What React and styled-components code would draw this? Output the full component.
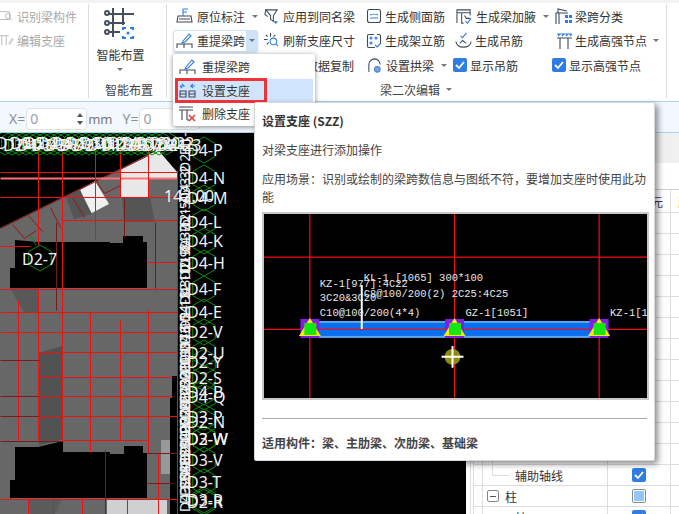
import React from "react";
import styled, { createGlobalStyle } from "styled-components";

const FONT = `"Noto Sans CJK SC", "Noto Sans", sans-serif`;
const INK = "#3f4a57";
const BLUE = "#2f7de1";

const Global = createGlobalStyle`
  html, body { margin: 0; padding: 0; background: #fff; }
  body { font-family: ${FONT}; font-size: 12px; color: #333; }
`;

const Page = styled.div`
  position: relative;
  width: 679px;
  height: 514px;
  overflow: hidden;
  display: flex;
  flex-direction: column;
`;

const Ribbon = styled.div`
  display: flex;
  height: 101px;
  box-sizing: border-box;
  padding: 1px 12px 3px 0;
  border-top: 3px solid #f3f3f3;
  background: #fff;
`;
const Group = styled.div`
  width: ${(p) => p.$w}px;
  flex: ${(p) => (p.$grow ? "1" : "none")};
  box-sizing: border-box;
  border-right: 1px solid #dcdcdc;
  display: flex;
  flex-direction: column;
  align-items: ${(p) => (p.$center ? "center" : "stretch")};
  padding-left: ${(p) => p.$pad || 0}px;
`;
const Item = styled.div`
  display: flex;
  align-items: center;
  gap: ${(p) => p.$gap ?? 3}px;
  height: 24.5px;
  padding-left: ${(p) => p.$ml || 0}px;
  white-space: nowrap;
  font-size: 12px;
  color: ${(p) => (p.$disabled ? "#a8a8a8" : "#333")};
`;
const Caret = styled.span`
  width: 0;
  height: 0;
  margin-left: ${(p) => p.$ml ?? 4}px;
  border-left: 3px solid transparent;
  border-right: 3px solid transparent;
  border-top: 3px solid #777;
`;
const BigButton = styled.div`
  display: flex;
  flex-direction: column;
  align-items: center;
  padding-top: 4px;
  margin-right: 14px;
  line-height: 18px;
  height: 76px;
  box-sizing: border-box;
  gap: 4px;
`;
const GroupLabel = styled.div`
  display: flex;
  align-items: center;
  justify-content: center;
  height: 18px;
  margin-top: ${(p) => p.$mt ?? 0}px;
  margin-left: ${(p) => p.$shift || 0}px;
  padding-right: ${(p) => p.$back || 0}px;
  color: #444;
  font-size: 12px;
`;
const Columns = styled.div`
  display: flex;
  height: 74px;
`;
const Column = styled.div`
  width: ${(p) => p.$w}px;
  flex: none;
  display: flex;
  flex-direction: column;
`;
const Active = styled.div`
  position: relative;
  display: flex;
  align-items: center;
  gap: 3px;
  width: 85px;
  height: 22px;
  margin: 1px 0 1.5px -1px;
  padding-left: 2px;
  box-sizing: border-box;
  border: 1px solid #cfe2f7;
  border-radius: 3px;
  background: #fff;
  box-shadow: 0 1px 2px rgba(120, 160, 210, 0.4);
`;
const ActiveArrow = styled.span`
  position: absolute;
  top: 0;
  right: 0;
  bottom: 0;
  width: 11px;
  display: flex;
  align-items: center;
  justify-content: center;
  background: #cfe3f8;
`;
const Check = styled.span`
  width: 14px;
  height: 14px;
  flex: none;
  border-radius: 2px;
  background: ${BLUE};
  display: flex;
  align-items: center;
  justify-content: center;
`;

const OptionBar = styled.div`
  height: 32px;
  box-sizing: border-box;
  padding: 3px 0 0 9px;
  display: flex;
  align-items: center;
  background: #f2f8fe;
  border-top: 1px solid #a9d0f3;
  border-bottom: 1px solid #a9d0f3;
  font-family: "Noto Sans", sans-serif;
  font-size: 14px;
  color: #8a8f96;
`;
const NumberField = styled.div`
  width: 61px;
  height: 22px;
  margin: 0 1px 0 1px;
  box-sizing: border-box;
  border: 1px solid #dfe3e8;
  border-radius: 4px;
  background: #fff;
  padding-left: 3px;
  display: flex;
  align-items: center;
  justify-content: space-between;
  color: #9aa0a6;
`;
const Spin = styled.span`
  width: 12px;
  display: flex;
  flex-direction: column;
  align-items: center;
  gap: 4px;
`;
const SpinArrow = styled.i`
  width: 0;
  height: 0;
  border-left: 3px solid transparent;
  border-right: 3px solid transparent;
  ${(p) => (p.$up ? "border-bottom: 4px solid #555;" : "border-top: 4px solid #555;")}
`;
const Unit = styled.span`
  margin-right: 10px;
  font-size: 13px;
  color: #777;
`;

const Main = styled.div`
  flex: 1;
  display: flex;
  min-height: 0;
`;
const Canvas = styled.svg`
  width: 466px;
  height: 381px;
  flex: none;
  display: block;
  background: #000;
`;
const Side = styled.div`
  flex: 1;
  display: flex;
  flex-direction: column;
  background: #fff;
`;
const SideTools = styled.div`
  height: 30px;
  background: #f0f0f0;
  flex: none;
`;
const SideGap = styled.div`
  height: 26px;
  flex: none;
  border-bottom: 1px solid #cfcfcf;
`;
const Table = styled.div`
  margin-left: 4px;
  border-left: 1px solid #ddd;
  padding-left: 2px;
  flex: 1;
`;
const Row = styled.div`
  display: grid;
  grid-template-columns: 9px 125px 63px 1fr;
  height: ${(p) => p.$h || 21}px;
  box-sizing: border-box;
  border-bottom: 1px solid #dedede;
`;
const Cell = styled.div`
  position: relative;
  border-left: 1px solid #dedede;
  display: flex;
  align-items: center;
  justify-content: ${(p) => (p.$center ? "center" : p.$end ? "flex-end" : "flex-start")};
  padding-left: ${(p) => p.$pad || 0}px;
  padding-right: ${(p) => p.$padEnd || 0}px;
  font-size: 12px;
  white-space: nowrap;
  color: ${(p) => p.$color || "#333"};
`;
const TreeLine = styled.span`
  position: absolute;
  left: 9px;
  top: -4px;
  width: 16px;
  height: 14px;
  border-left: 1px solid #ddd;
  border-bottom: 1px solid #ddd;
`;
const Minus = styled.span`
  width: 12px;
  height: 12px;
  box-sizing: border-box;
  margin: 0 6px 0 4px;
  border: 1px solid #888;
  border-radius: 2px;
  display: flex;
  align-items: center;
  justify-content: center;
  &::before {
    content: "";
    width: 6px;
    height: 1px;
    background: #555;
  }
`;
const Partial = styled.span`
  width: 14px;
  height: 14px;
  box-sizing: border-box;
  border: 1px solid #8a8a8a;
  border-radius: 2px;
  padding: 1px;
  background: #fff;
  display: flex;
  &::before {
    content: "";
    flex: 1;
    background: #93c5fb;
  }
`;

const Menu = styled.div`
  position: absolute;
  left: 173px;
  top: 54px;
  width: 142px;
  height: 72px;
  padding: 1px 2px 0 4px;
  box-sizing: border-box;
  background: #fff;
  border-radius: 2px;
  box-shadow: 0 1px 5px rgba(0, 0, 0, 0.45);
`;
const MenuItem = styled.div`
  position: relative;
  height: 23.5px;
  display: flex;
  align-items: center;
  padding-left: 2px;
  gap: 5px;
  font-size: 12px;
  color: #333;
  background: ${(p) => (p.$active ? "#d0e5fd" : "transparent")};
  ${(p) =>
    p.$active &&
    `&::after {
      content: "";
      position: absolute;
      left: -2px;
      top: -1px;
      width: 92px;
      height: 25px;
      box-sizing: border-box;
      border: 3px solid #ee3338;
    }`}
`;
const Tooltip = styled.div`
  position: absolute;
  left: 254px;
  top: 102px;
  width: 401px;
  height: 359px;
  box-sizing: border-box;
  padding: 8px 7px 0 7px;
  background: #fff;
  border: 1px solid #d8d8d8;
  border-radius: 2px;
  box-shadow: 3px 3px 6px rgba(0, 0, 0, 0.45);
  font-size: 12px;
  color: #444;
`;
const TipTitle = styled.div`
  font-weight: 700;
  line-height: 20px;
  color: #333;
`;
const TipText = styled.p`
  margin: ${(p) => p.$mt}px 0 0;
  line-height: 18px;
`;
const TipPicture = styled.svg`
  display: block;
  width: 387px;
  height: 188px;
  margin-top: 6px;
  box-sizing: border-box;
  border: 2px solid #c8c8c8;
  background: #000;
`;
const TipRule = styled.div`
  margin-top: 18px;
  border-top: 1px solid #aaa;
`;
const TipFoot = styled.div`
  margin-top: 15px;
  line-height: 18px;
  font-weight: 700;
  color: #444;
`;

/* ---------- icons ---------- */
const Ico = ({ s = 14, children, box }) => (
  <svg width={s} height={s} viewBox={box || "0 0 16 16"} fill="none" stroke={INK} strokeWidth="1.1" style={{ flex: "none" }}>
    {children}
  </svg>
);
const IcoRecognize = () => (
  <Ico><g stroke="#bbb"><path d="M0 3h11v9H0" /><circle cx="9" cy="8" r="3" /><path d="M11 10l3 3" /></g></Ico>
);
const IcoEditSupport = () => (
  <Ico><g stroke="#bbb"><path d="M0 2h10M2 2v11M7 2v11M10 11l4-6 1 1-4 6z" /></g></Ico>
);
const IcoOrigin = () => (
  <Ico s={18} box="0 0 18 18">
    <path d="M2 9h13l1 6H1zM3 12h11" /><path d="M7 9V2" stroke={BLUE} /><path d="M7 2h5M7 5h4" stroke={BLUE} />
  </Ico>
);
const IcoApply = () => (
  <Ico s={17} box="0 0 18 18">
    <path d="M3 2h12l-4 6v6l-3-2V8z" /><path d="M3 2l-1 5 3 2" /><path d="M11 14h5l-2.500 3z" fill={BLUE} stroke="none" />
  </Ico>
);
const IcoRelift = () => (
  <Ico s={18} box="0 0 18 18">
    <path d="M1 16v-4h15v4M8 12v4" /><path d="M7 9l6-7 2 2-6 6-3 1z" stroke={BLUE} />
  </Ico>
);
const IcoRefresh = () => (
  <Ico s={17} box="0 0 18 18">
    <circle cx="11" cy="10" r="3.500" stroke={BLUE} /><path d="M14 13l2 2" stroke={BLUE} />
    <path d="M1 8h4M8 1v4M3 3l2 2M13 3l-2 2M4 13l2-2" />
  </Ico>
);
const IcoSide = () => (
  <Ico s={16}>
    <rect x="1.500" y="1.500" width="13" height="13" rx="2" /><path d="M4 7c2-1 6-1 8 0M4 10h8" stroke={BLUE} />
  </Ico>
);
const IcoStand = () => (
  <Ico s={16}>
    <path d="M11 1.500h2a1.500 1.500 0 0 1 1.500 1.500v7M9 14.500H3A1.500 1.500 0 0 1 1.500 13V3A1.500 1.500 0 0 1 3 1.500h5" />
    <g stroke={BLUE}><circle cx="5" cy="5" r="1" /><circle cx="10" cy="5" r="1" /><circle cx="5" cy="10" r="1" /><path d="M9 12l2 2 4-4" /></g>
  </Ico>
);
const IcoArch = () => (
  <Ico s={17} box="0 0 18 18">
    <path d="M3 14V8a6 6 0 0 1 12 0" /><path d="M3 14v2" />
    <circle cx="12" cy="13" r="3" fill="#7aa7dc" stroke="#4c83c4" />
  </Ico>
);
const IcoHaunch = () => (
  <Ico s={17} box="0 0 18 18">
    <path d="M1 16V2h14v6M1 5h14M6 5v11h2" /><path d="M9 8l2 3 4 0" /><path d="M10 14l2 2 4-5" stroke={BLUE} />
  </Ico>
);
const IcoHanger = () => (
  <Ico s={17} box="0 0 18 18">
    <path d="M1 10c0 8 16 8 16 0" /><path d="M5 12l3-3 4 3" /><path d="M6 4l2 2 4-5" stroke={BLUE} />
  </Ico>
);
const IcoClass = () => (
  <Ico s={18} box="0 0 18 18">
    <path d="M1 17V6h12M3 6V2l9 2M4 6v11" />
    <g fill={BLUE} stroke="none"><rect x="10" y="8" width="3" height="3" /><rect x="14" y="8" width="3" height="3" /><rect x="10" y="13" width="3" height="3" /><rect x="14" y="13" width="3" height="3" /></g>
  </Ico>
);
const IcoHigh = () => (
  <Ico s={18} box="0 0 18 18">
    <path d="M2 6h15M5 6v11M13 6v11" /><path d="M2 2l15 0M3 4l2-2M7 4l2-2M11 4l2-2M15 4l2-2" stroke={BLUE} />
  </Ico>
);
const IcoCopy = () => (
  <Ico s={16}><rect x="2" y="2" width="9" height="9" /><rect x="5" y="5" width="9" height="9" stroke={BLUE} /></Ico>
);
const IcoTick = ({ s = 10 }) => (
  <svg width={s} height={s} viewBox="0 0 10 10" fill="none" stroke="#fff" strokeWidth="1.800"><path d="M1 5l3 3 5-6" /></svg>
);
const IcoSmart = () => (
  <svg width="34" height="34" viewBox="0 0 34 34" fill="none" stroke="#46505c" strokeWidth="2">
    <path d="M10 0v29M20 0v17M5 6h26M7 15h15M7 24h10" />
    <circle cx="4" cy="5" r="2" /><circle cx="4" cy="15" r="2" /><circle cx="4" cy="24" r="2" />
    <g stroke="#2f80e6" strokeWidth="2.200">
      <path d="M20 22v-2h3M27 20h3v2M30 28v2h-3M23 30h-3v-2" />
      <circle cx="25" cy="25" r="1.500" fill="#2f80e6" stroke="none" />
    </g>
  </svg>
);
const IcoSetSupport = () => (
  <Ico s={18} box="0 0 18 18">
    <path d="M1 10h6v6H1zM1 13h6M10 10h6v6h-6zM10 13h6" />
    <path d="M1 5h4l-2-2M1 5l2 2M16 5h-4l2-2M12 5l2 2" stroke={BLUE} />
  </Ico>
);
const IcoDelSupport = () => (
  <Ico s={18} box="0 0 18 18">
    <path d="M0 2h14M0 5h14M3 5v10M8 5v10M8 15h2" />
    <path d="M10 10l6 6M16 10l-6 6" stroke="#e23b3b" strokeWidth="1.500" />
  </Ico>
);

/* ---------- CAD drawing ---------- */
const GRAY = "#676767";
const poly = (pts) => pts.map((p) => p.join(",")).join(" ");
const RED_V = [
  [18, 300, 440], [38, 150, 245], [38, 288, 440], [62, 150, 440], [95, 150, 240], [90, 312, 452],
  [120, 150, 197], [120, 320, 440], [148, 150, 197], [148, 310, 453], [177, 170, 514],
  [28, 498, 514], [53, 498, 514], [82, 498, 514], [127, 498, 514], [158, 453, 514],
];
const RED_H = [
  [0, 177, 172], [0, 177, 197], [62, 177, 220], [0, 30, 246], [147, 177, 262], [0, 177, 289], [0, 177, 312],
  [0, 177, 332], [39, 177, 352], [39, 172, 377], [39, 172, 396], [39, 177, 416], [63, 147, 440], [0, 177, 499],
];
const DARK = [[0, 39, 360], [0, 63, 441], [147, 177, 453], [147, 172, 483], [0, 39, 396], [0, 39, 416]];
const LABELS = [
  ["D4-P", 150], ["D4-N", 178], ["D4-M", 198], ["D4-L", 222], ["D4-K", 241], ["D4-H", 263], ["D4-F", 289], ["D4-E", 312],
  ["D2-V", 332], ["D2-U", 353], ["D2-Y", 362], ["D2-S", 378], ["D4-B", 392], ["D4-Q", 397], ["D3-P", 417], ["D2-N", 422],
  ["D3-W", 439], ["D2-W", 439], ["D3-V", 460], ["D3-T", 482], ["D2-R", 502], ["D3-R", 500],
];
const hex = (cx, cy, r = 13) =>
  Array.from({ length: 6 }, (_, i) => {
    const a = (Math.PI / 3) * i + Math.PI / 6;
    return `${cx + r * Math.cos(a)},${cy + r * Math.sin(a)}`;
  }).join(" ");
const TOP_X = Array.from({ length: 24 }, (_, i) => i * 7 - 4);
const SIDE_Y = [
  155, 172, 196, 202, 226, 232, 250, 255, 274, 280, 298, 305, 322, 330, 344, 352, 364, 372, 380, 388, 396, 402, 410, 418,
  426, 434, 440, 448, 456, 464, 472, 480, 488, 496, 504, 512,
];

const CadText = styled.text`
  font-family: "Noto Sans", sans-serif;
  font-size: ${(p) => p.$size || 16}px;
  fill: #f2f2f2;
`;
const MonoText = styled.text`
  font-family: "Liberation Mono", monospace;
  font-size: 10.500px;
  fill: #e6e6e6;
`;

function Cad() {
  return (
    <Canvas viewBox="0 133 466 381">
      <polygon fill={GRAY} points={poly([[0, 228], [148, 155], [158, 150], [177, 172], [177, 514], [0, 514]])} />
      <polygon fill="#e8e8e8" points={poly([[120, 170], [148, 155], [158, 150], [177, 172], [177, 178], [148, 178], [148, 197], [120, 197]])} />
      <polygon fill="#f0f0f0" points={poly([[80, 190], [95, 181], [109, 204], [90, 214]])} />
      <polygon fill="#555" points={poly([[66, 197], [80, 190], [92, 214], [74, 219]])} />
      <polygon fill="#555" points={poly([[122, 197], [150, 197], [155, 222], [124, 222]])} />
      <polygon fill="#525252" points={poly([[39, 353], [62, 346], [62, 440], [39, 445]])} />
      <polygon fill="#585858" points={poly([[10, 288], [38, 288], [38, 312], [24, 312]])} />
      <polygon fill="#999" points={poly([[161, 440], [170, 440], [170, 474], [161, 474]])} />
      <polygon fill="#000" points={poly([[15, 240], [38, 242], [110, 242], [110, 243], [123, 243], [123, 236], [143, 236], [143, 242], [147, 242], [147, 288], [10, 288], [10, 268], [15, 268]])} />
      <polygon fill="#000" points={poly([[15, 447], [38, 447], [63, 441], [63, 452], [110, 452], [110, 454], [124, 454], [124, 446], [143, 446], [143, 453], [147, 453], [147, 498], [10, 498], [10, 480], [15, 480]])} />
      <polygon fill="#000" points={poly([[172, 376], [177, 376], [177, 514], [170, 514], [170, 398], [172, 398]])} />
      <polygon fill="#5b5b5b" points={poly([[28, 499], [62, 499], [55, 514], [30, 514]])} />
      <polygon fill="#d0d0d0" points={poly([[107, 499], [167, 499], [167, 514], [107, 514]])} />
      <g transform="translate(0.5 0.5)">
        <path stroke="#9a1414" strokeWidth="1" d="M0 228L148 155M12 224l12 14 12-8M28 215l14 16M96 181l8 12 16-8M72 197l12 20M50 207l10 20" fill="none" />
        <path stroke="#ff7070" strokeWidth="2" d="M0 178H177" />
        {RED_V.map(([x, a, b], i) => <line key={i} x1={x} x2={x} y1={a} y2={b} stroke="#f01010" strokeWidth="1" />)}
        {RED_H.map(([a, b, y], i) => <line key={i} x1={a} x2={b} y1={y} y2={y} stroke="#f01010" strokeWidth="1" />)}
        {DARK.map(([a, b, y], i) => <line key={i} x1={a} x2={b} y1={y} y2={y} stroke="#7c1a1a" strokeWidth="1" />)}
        <path stroke="#7c1a1a" d="M56 222v88M124 197v40M155 222v66M105 450v64" fill="none" />
      </g>
      <polyline points="30,235 36,245" stroke="#0b8f0b" fill="none" />
      <polygon points={hex(40, 258)} stroke="#0b8f0b" fill="none" />
      <CadText x="22" y="265">D2-7</CadText>
      {TOP_X.map((x, i) => <polygon key={i} points={hex(x + 9, 143, 12)} stroke="#0b8f0b" fill="none" />)}
      {LABELS.map(([, y], i) => <polygon key={i} points={hex(204, y)} stroke="#0b8f0b" fill="none" />)}
      {TOP_X.map((x, i) => <CadText key={i} x={x} y={i % 2 ? 151 : 149}>{`D${(i % 5) + 1}-${i}`}</CadText>)}
      {SIDE_Y.map((y, i) => (
        <CadText key={i} $size={14} transform={`rotate(-90 190 ${y})`} x="190" y={y}>{`D${(i % 4) + 1}-${i}`}</CadText>
      ))}
      {LABELS.map(([t, y]) => <CadText key={t} x="187" y={y + 6}>{t}</CadText>)}
      <CadText x="164" y="202">142.00</CadText>
    </Canvas>
  );
}

function SupportPicture() {
  return (
    <TipPicture viewBox="263 214 384 184">
      <g stroke="#f01010" strokeWidth="1.200">
        <path d="M309 214V398M454 214V398M599 214V398M263 257H647" />
      </g>
      <rect x="309" y="322" width="290" height="15" fill="#0a6ef0" stroke="#5ea6ee" strokeWidth="2" />
      <path d="M263 329.500H647" stroke="#f01010" strokeWidth="1.200" />
      <path d="M361 285V329" stroke="#fff" strokeWidth="2" />
      {[309, 454, 599].map((x) => (
        <g key={x}>
          <rect x={x - 9.500} y="319" width="19" height="19" fill="#8a18e6" />
          <polygon points={`${x},318 ${x + 11},336 ${x - 11},336`} fill="#f5ee10" />
          <rect x={x - 5.500} y="323" width="12" height="12" fill="#10e810" />
        </g>
      ))}
      <circle cx="452" cy="357" r="8" fill="#8f8a10" />
      <path d="M441 357H463M452 346V368" stroke="#fff" strokeWidth="2" />
      <MonoText x="363" y="281">KL-1 [1065] 300*100</MonoText>
      <MonoText x="319" y="287">KZ-1[977]:4C22</MonoText>
      <MonoText x="363" y="297">C8@100/200(2) 2C25:4C25</MonoText>
      <MonoText x="319" y="301">3C20&amp;3C20</MonoText>
      <MonoText x="319" y="316">C10@100/200(4*4)</MonoText>
      <MonoText x="465" y="316">GZ-1[1051]</MonoText>
      <MonoText x="610" y="316">KZ-1[1051]</MonoText>
    </TipPicture>
  );
}

const SideRows = Array.from({ length: 12 }, (_, i) => i);

export default function App() {
  return (
    <Page>
      <Global />
      <Ribbon>
        <Group $w={89}>
          <Item $disabled><IcoRecognize />识别梁构件</Item>
          <Item $disabled><IcoEditSupport />编辑支座</Item>
        </Group>
        <Group $w={78} $center>
          <BigButton>
            <IcoSmart />
            智能布置
            <Caret $ml={0} />
          </BigButton>
          <GroupLabel $mt={2} $shift={3}>智能布置</GroupLabel>
        </Group>
        <Group $grow $pad={7}>
          <Columns>
            <Column $w={89}>
              <Item $ml={2}><IcoOrigin />原位标注<Caret /></Item>
              <Active>
                <IcoRelift />重提梁跨
                <ActiveArrow><Caret $ml={0} /></ActiveArrow>
              </Active>
            </Column>
            <Column $w={103}>
              <Item><IcoApply />应用到同名梁</Item>
              <Item><IcoRefresh />刷新支座尺寸</Item>
              <Item><IcoCopy />梁跨数据复制</Item>
            </Column>
            <Column $w={87}>
              <Item><IcoSide />生成侧面筋</Item>
              <Item><IcoStand />生成架立筋</Item>
              <Item><IcoArch />设置拱梁<Caret /></Item>
            </Column>
            <Column $w={99}>
              <Item $ml={3}><IcoHaunch />生成梁加腋<Caret /></Item>
              <Item $ml={2}><IcoHanger />生成吊筋</Item>
              <Item><Check><IcoTick /></Check>显示吊筋</Item>
            </Column>
            <Column $w={110}>
              <Item $ml={3} $gap={2}><IcoClass />梁跨分类</Item>
              <Item $ml={3} $gap={2}><IcoHigh />生成高强节点<Caret /></Item>
              <Item><Check><IcoTick /></Check>显示高强节点</Item>
            </Column>
          </Columns>
          <GroupLabel $mt={3} $back={8}>梁二次编辑<Caret $ml={6} /></GroupLabel>
        </Group>
      </Ribbon>
      <OptionBar>
        X=
        <NumberField>0<Spin><SpinArrow $up /><SpinArrow /></Spin></NumberField>
        <Unit>mm</Unit>
        Y=
        <NumberField>0<Spin><SpinArrow $up /><SpinArrow /></Spin></NumberField>
      </OptionBar>
      <Main>
        <Cad />
        <Side>
          <SideTools />
          <SideGap />
          <Table>
            <Row $h={23}>
              <Cell /><Cell />
              <Cell $end $padEnd={7} $color="#336">构件单元</Cell>
              <Cell $pad={7} $color="#e89a2c">颜色</Cell>
            </Row>
            {SideRows.map((i) => (
              <Row key={i}>
                <Cell /><Cell /><Cell $center><Check /></Cell><Cell />
              </Row>
            ))}
            <Row>
              <Cell /><Cell $pad={32}><TreeLine />辅助轴线</Cell>
              <Cell $center><Check><IcoTick /></Check></Cell><Cell />
            </Row>
            <Row>
              <Cell />
              <Cell><Minus />柱</Cell>
              <Cell $center><Partial /></Cell><Cell />
            </Row>
            <Row>
              <Cell /><Cell $pad={32}>柱</Cell>
              <Cell $center><Check><IcoTick /></Check></Cell><Cell />
            </Row>
          </Table>
        </Side>
      </Main>
      <Menu>
        <MenuItem><IcoRelift />重提梁跨</MenuItem>
        <MenuItem $active><IcoSetSupport />设置支座</MenuItem>
        <MenuItem><IcoDelSupport />删除支座</MenuItem>
      </Menu>
      <Tooltip>
        <TipTitle>设置支座 (SZZ)</TipTitle>
        <TipText $mt={10}>对梁支座进行添加操作</TipText>
        <TipText $mt={11}>应用场景：识别或绘制的梁跨数信息与图纸不符，要增加支座时使用此功能</TipText>
        <SupportPicture />
        <TipRule />
        <TipFoot>适用构件：梁、主肋梁、次肋梁、基础梁</TipFoot>
      </Tooltip>
    </Page>
  );
}
